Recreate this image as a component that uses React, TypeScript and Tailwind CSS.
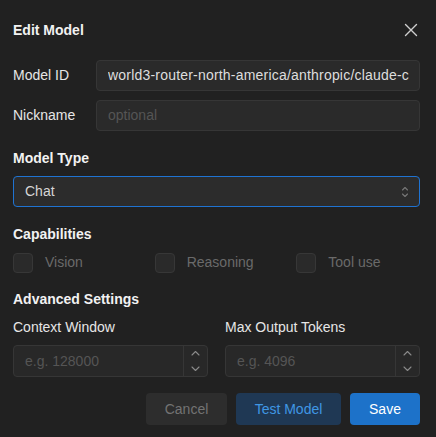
import React from "react";

const font = { fontFamily: '"Liberation Sans", Arial, sans-serif' };

function UpDown({ className }: { className?: string }) {
  return (
    <svg width="8" height="12" viewBox="0 0 8 12" className={className} fill="none" stroke="currentColor" strokeWidth="1.1" strokeLinecap="round" strokeLinejoin="round">
      <path d="M1.5 4 L4 1.5 L6.5 4" />
      <path d="M1.5 8 L4 10.5 L6.5 8" />
    </svg>
  );
}

function Check({ label }: { label: string }) {
  return (
    <div className="flex items-center gap-[12px]">
      <div className="w-[20px] h-[20px] rounded-[4px] border border-[#373737] bg-[#2a2a2a]" />
      <span className="text-[14px] text-[#6a6a6a]">{label}</span>
    </div>
  );
}

function NumberInput({ placeholder }: { placeholder: string }) {
  return (
    <div className="flex h-[32px] rounded-[4px] border border-[#363636] bg-[#282828] overflow-hidden">
      <div className="flex-1 flex items-center pl-[11px] text-[14px] text-[#555555]">{placeholder}</div>
      <div className="w-[24px] border-l border-[#363636] flex flex-col items-center justify-between py-[4px] text-[#8a8a8a]">
        <svg width="9" height="6" viewBox="0 0 9 6" fill="none" stroke="currentColor" strokeWidth="1.1" strokeLinecap="round" strokeLinejoin="round">
          <path d="M1 5 L4.5 1.5 L8 5" />
        </svg>
        <svg width="9" height="6" viewBox="0 0 9 6" fill="none" stroke="currentColor" strokeWidth="1.1" strokeLinecap="round" strokeLinejoin="round">
          <path d="M1 1 L4.5 4.5 L8 1" />
        </svg>
      </div>
    </div>
  );
}

export default function App() {
  return (
    <div className="w-[436px] h-[437px] bg-[#212121] pl-[13px] pr-[16px] overflow-hidden" style={font}>
      <div className="h-[60px] flex items-center justify-between">
        <span className="text-[14px] font-bold text-[#f2f2f2]">Edit Model</span>
        <svg width="14" height="14" viewBox="0 0 14 14" className="mr-[2px] text-[#cfcfcf]" fill="none" stroke="currentColor" strokeWidth="1.4" strokeLinecap="round">
          <path d="M1.5 1.5 L12.5 12.5 M12.5 1.5 L1.5 12.5" />
        </svg>
      </div>

      <div className="flex flex-col gap-[9px]">
        <div className="flex items-center h-[31px]">
          <span className="w-[83px] text-[14px] text-[#e6e6e6]">Model ID</span>
          <div className="flex-1 min-w-0 h-[31px] rounded-[4px] border border-[#363636] bg-[#2a2a2a] flex items-center pl-[11px] pr-[10px] overflow-hidden whitespace-nowrap text-[14px] tracking-[0.2px] text-[#dedede]">
            <span className="overflow-hidden block">world3-router-north-america/anthropic/claude-c</span>
          </div>
        </div>
        <div className="flex items-center h-[31px]">
          <span className="w-[83px] text-[14px] text-[#e6e6e6]">Nickname</span>
          <div className="flex-1 h-[31px] rounded-[4px] border border-[#363636] bg-[#2a2a2a] flex items-center pl-[11px] text-[14px] text-[#555555]">
            optional
          </div>
        </div>
      </div>

      <div className="mt-[17px] h-[20px] flex items-center text-[14px] font-bold text-[#f2f2f2]">Model Type</div>
      <div className="mt-[8px] h-[31px] rounded-[4px] border border-[#1f73d2] bg-[#2c2c2c] flex items-center justify-between pl-[11px] pr-[10px]">
        <span className="text-[14px] text-[#d6d6d6]">Chat</span>
        <UpDown className="text-[#777777]" />
      </div>

      <div className="mt-[17px] h-[20px] flex items-center text-[14px] font-bold text-[#f2f2f2]">Capabilities</div>
      <div className="mt-[8px] grid grid-cols-3 gap-x-[18px]">
        <Check label="Vision" />
        <Check label="Reasoning" />
        <Check label="Tool use" />
      </div>

      <div className="mt-[16px] h-[20px] flex items-center text-[14px] font-bold text-[#f2f2f2]">Advanced Settings</div>
      <div className="mt-[8px] grid grid-cols-2 gap-x-[17px]">
        <div className="flex flex-col gap-[8px]">
          <span className="h-[20px] flex items-center text-[14px] text-[#e6e6e6]">Context Window</span>
          <NumberInput placeholder="e.g. 128000" />
        </div>
        <div className="flex flex-col gap-[8px]">
          <span className="h-[20px] flex items-center text-[14px] text-[#e6e6e6]">Max Output Tokens</span>
          <NumberInput placeholder="e.g. 4096" />
        </div>
      </div>

      <div className="mt-[16px] flex justify-end gap-[9px]">
        <button className="w-[81px] h-[32px] rounded-[4px] bg-[#2d2d2d] text-[14px] text-[#737373]">Cancel</button>
        <button className="w-[105px] h-[32px] rounded-[4px] bg-[#1f3854] text-[14px] text-[#3f97e4]">Test Model</button>
        <button className="w-[70px] h-[32px] rounded-[4px] bg-[#1d72c9] text-[14px] text-white">Save</button>
      </div>
    </div>
  );
}
